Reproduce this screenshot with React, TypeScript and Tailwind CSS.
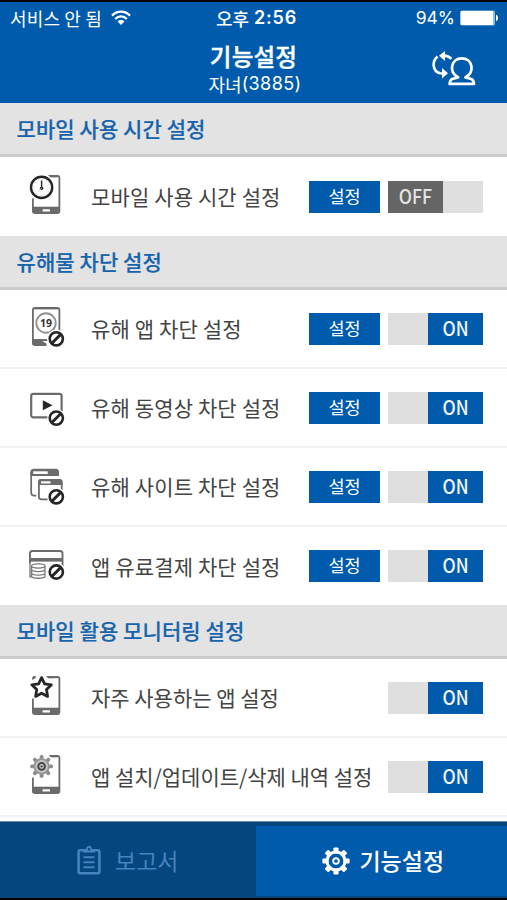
import type { ReactNode } from "react";

const GRAY = "#6b6b6b";
const DARK = "#262626";

function BlockMark() {
  return (
    <g>
      <circle cx="28.3" cy="33.8" r="9.2" fill="#fff" />
      <circle cx="28.3" cy="33.8" r="6.6" fill="#fff" stroke={DARK} strokeWidth="2.6" />
      <path d="M23.9 38.2 L32.7 29.4" stroke={DARK} strokeWidth="2.9" />
    </g>
  );
}

function Svg({ children }: { children: ReactNode }) {
  return (
    <svg width="40" height="44" viewBox="0 0 40 44" fill="none" className="mb-[3px] block">
      {children}
    </svg>
  );
}

function PhoneBody() {
  return (
    <g>
      <path d="M4 4.5 Q4 2 6.5 2 H29.5 Q32.3 2 32.3 5 V38 Q32.3 41 29.3 41 H7 Q4 41 4 38 Z" fill={GRAY} />
      <rect x="5.8" y="4.2" width="24.7" height="29.5" fill="#fff" />
      <rect x="14.5" y="36.3" width="7.5" height="2.2" rx="0.6" fill="#fff" />
    </g>
  );
}

function ClockIcon() {
  return (
    <Svg>
      <PhoneBody />
      <path d="M1 0 H20 L28 15 L18 25.5 H1 Z" fill="#fff" />
      <path d="M20 2 H29 V4.2 H22.3 Z" fill={GRAY} />
      <circle cx="13.6" cy="14.4" r="10.6" fill="#fff" stroke={DARK} strokeWidth="2.4" />
      <path d="M13.6 7.5 V15.5" stroke={DARK} strokeWidth="1.4" />
      <circle cx="13.6" cy="15.2" r="1.7" fill={DARK} />
      <path d="M13.6 15.2 L10 18.5" stroke="#c9c9c9" strokeWidth="1" />
      <circle cx="13.6" cy="14.4" r="8" stroke="#bbb" strokeWidth="0.9" strokeDasharray="1 3.2" />
    </Svg>
  );
}

function AdultIcon() {
  return (
    <Svg>
      <path d="M4 5 Q4 2 7 2 H29.3 Q32.3 2 32.3 5 V38 Q32.3 41 29 41 H7 Q4 41 4 38 Z" fill={GRAY} />
      <rect x="5.8" y="4.4" width="24.7" height="29.8" fill="#fff" />
      <circle cx="18" cy="18" r="9.7" stroke="#929292" strokeWidth="1.9" />
      <text x="18" y="21.8" textAnchor="middle" fontSize="10.5" fontWeight="700" fill="#333" className="font-['Noto_Sans',sans-serif]">19</text>
      <path d="M18.5 41.5 V38.5 L14.5 36.2 L19 34.2 V30 H33.5 V42 Z" fill="#fff" />
      <path d="M5 34.2 H19.5 V36 H5 Z" fill={GRAY} />
      <BlockMark />
    </Svg>
  );
}

function VideoIcon() {
  return (
    <Svg>
      <rect x="3.2" y="9.8" width="30.4" height="23.6" rx="2.2" stroke={GRAY} strokeWidth="2.2" />
      <path d="M14.8 16.2 L24.5 21.2 L14.8 26.2 Z" fill={DARK} />
      <g transform="translate(0 0.3)"><BlockMark /></g>
    </Svg>
  );
}

function SiteIcon() {
  return (
    <Svg>
      <path d="M3.2 9 V29.5 Q3.2 32.6 6 32.6 H8.3" stroke={GRAY} strokeWidth="1.7" />
      <path d="M2.4 9.5 Q2.4 5.8 5.5 5.8 H27.8 Q31 5.8 31 9.5 V13 H2.4 Z" fill={GRAY} />
      <rect x="5.2" y="8.3" width="14.5" height="2.7" fill="#fff" />
      <rect x="8.8" y="14.2" width="27" height="24" fill="#fff" />
      <path d="M10.9 19.5 Q10.9 17 13.5 17 H31 Q33.7 17 33.7 20 V36.3 H13.5 Q10.9 36.3 10.9 33.8 Z" stroke={GRAY} strokeWidth="1.8" fill="#fff" />
      <path d="M10.1 19.5 Q10.1 16.1 13.2 16.1 H31.2 Q34.6 16.1 34.6 19.5 V22 H10.1 Z" fill={GRAY} />
      <rect x="13" y="18.3" width="9.5" height="2.2" fill="#fff" />
      <BlockMark />
    </Svg>
  );
}

function PaymentIcon() {
  return (
    <Svg>
      <path d="M2 20 V10.5 Q2 8 4.5 8 H32 Q34.5 8 34.5 10.5 V24" stroke={GRAY} strokeWidth="1.9" />
      <rect x="2" y="15" width="33" height="3.6" fill={GRAY} />
      <path d="M2 18 V34 H17" stroke={GRAY} strokeWidth="1.2" />
      <g fill="#fff" stroke="#777" strokeWidth="1.3">
        <path d="M3.6 31 V33.2 C3.6 35.9 17 35.9 17 33.2 V31" />
        <path d="M3.6 27 V29.8 C3.6 33 17 33 17 29.8 V27" />
        <path d="M3.6 23 V26.2 C3.6 29.3 17 29.3 17 26.2 V23" />
        <ellipse cx="10.3" cy="23" rx="6.7" ry="2.1" />
      </g>
      <g transform="translate(0 -4.8)"><BlockMark /></g>
    </Svg>
  );
}

function StarIcon() {
  return (
    <Svg>
      <PhoneBody />
      <path d="M8 1 H19.5 L26 12 L20 24.5 H2 V6 Z" fill="#fff" />
      <path d="M4 6 Q4 2 8 2 L7.6 4.3 Z M18 2 H25 V4.2 H20 Z" fill={GRAY} />
      <path d="M13.6 3.6 L16.6 9.8 L23.4 10.8 L18.5 15.6 L19.6 22.4 L13.6 19.2 L7.6 22.4 L8.7 15.6 L3.8 10.8 L10.6 9.8 Z" fill="#fff" stroke={DARK} strokeWidth="2.8" strokeLinejoin="round" />
    </Svg>
  );
}

const teeth = [0, 45, 90, 135, 180, 225, 270, 315];

function UpdateIcon() {
  return (
    <Svg>
      <PhoneBody />
      <path d="M1 0 H20 L28 15 L18 24.5 H1 Z" fill="#fff" />
      <path d="M22 2 H29 V4.2 H24.3 Z" fill={GRAY} />
      {teeth.map((a) => (
        <rect key={a} x="11.7" y="2" width="3.8" height="6" rx="1.6" fill="#8d8d8d" transform={`rotate(${a} 13.6 13.4)`} />
      ))}
      <circle cx="13.6" cy="13.4" r="7.2" fill="#c6c6c6" stroke="#969696" strokeWidth="1.8" />
      <circle cx="13.6" cy="13.4" r="3.3" fill="#ddd" stroke="#444" strokeWidth="2" />
      <circle cx="13.6" cy="13.4" r="1.2" fill="#444" />
    </Svg>
  );
}

function SwitchUserIcon() {
  return (
    <svg width="46" height="38" viewBox="0 0 46 38" fill="none" className="block">
      <path d="M26.2 26.4 C16 20.5 19.3 7.4 29.8 7.4 C40.3 7.4 43.6 20.5 33.4 26.4 L39.4 28 Q41.6 29 42 32.9 H17.6 Q18 29 20.2 28 Z" stroke="#fff" strokeWidth="2.7" strokeLinejoin="round" />
      <path d="M5.6 5.4 C-0.5 10.5 0.6 20.3 8 22.2 L11.5 22.5" stroke="#fff" strokeWidth="2.6" />
      <path d="M10 17 L16 22.3 L10 27.5 Z" fill="#fff" />
      <path d="M13 0 V10 L7 4.7 Z" fill="#fff" />
      <path d="M11 4.7 Q16 4.3 19.4 7.8" stroke="#fff" strokeWidth="2.6" />
    </svg>
  );
}

function ReportIcon() {
  return (
    <svg width="24" height="30" viewBox="0 0 24 30" fill="none" stroke="#4682bd" className="block">
      <rect x="1.6" y="5.2" width="20.8" height="23" rx="1.4" strokeWidth="2.6" />
      <path d="M6 7.5 V4.5 H9 C9 -0.5 15 -0.5 15 4.5 H18 V7.5 Z" fill="#4682bd" stroke="none" />
      <circle cx="12" cy="4.3" r="1.2" fill="#05467f" stroke="none" />
      <path d="M6.5 12.2 H17.5 M6.5 17.2 H17.5 M6.5 22.2 H17.5" strokeWidth="2" />
    </svg>
  );
}

function GearIcon() {
  return (
    <svg width="28" height="28" viewBox="0 0 28 28" fill="none" className="block">
      {teeth.map((a) => (
        <rect key={a} x="11.4" y="0.4" width="5.2" height="6" rx="1" fill="#fff" transform={`rotate(${a} 14 14)`} />
      ))}
      <circle cx="14" cy="14" r="9" stroke="#fff" strokeWidth="3" />
      <circle cx="14" cy="14" r="2.8" stroke="#fff" strokeWidth="1.9" />
    </svg>
  );
}

function StatusBar() {
  return (
    <div className="grid h-8 grid-cols-3 items-center pl-[10px] pr-[8px] text-white">
      <div className="flex items-center gap-[9px]">
        <span className="whitespace-nowrap text-[18px] leading-none tracking-[0.15px]">서비스 안 됨</span>
        <svg width="20" height="16" viewBox="0 0 20 16" fill="none" stroke="#fff" strokeWidth="2.3" className="block">
          <path d="M1 5.6 C6 0.2 14 0.2 19 5.6" />
          <path d="M4.2 9 C7.5 5.6 12.5 5.6 15.8 9" />
          <path d="M10 15 L6.6 11.4 C8.5 9.6 11.5 9.6 13.4 11.4 Z" fill="#fff" stroke="none" />
        </svg>
      </div>
      <div className="flex items-center justify-center gap-[5px] whitespace-nowrap pl-[4px] leading-none">
        <span className="text-[18px] font-medium">오후</span>
        <span className="font-['Inter',sans-serif] text-[18px] font-semibold tracking-[0.8px]">2:56</span>
      </div>
      <div className="flex items-center justify-end gap-[5px]">
        <span className="font-['Inter',sans-serif] text-[17.5px] leading-none">94%</span>
        <svg width="39" height="16" viewBox="0 0 39 16" className="block">
          <rect x="0.5" y="0.5" width="34.5" height="15" rx="1.5" fill="#8fb9df" />
          <rect x="0.5" y="1" width="32.5" height="14" rx="1" fill="#fff" />
          <path d="M36.5 5 Q38.6 8 36.5 11 Z" fill="#fff" stroke="#fff" />
        </svg>
      </div>
    </div>
  );
}

function Header() {
  return (
    <header className="h-[101px] shrink-0 bg-[#005bac]">
      <StatusBar />
      <div className="grid grid-cols-[1fr_auto_1fr]">
        <div />
        <div className="flex flex-col items-center whitespace-nowrap text-white">
          <h1 className="mt-[10px] text-[23.5px] font-medium leading-[25px] tracking-[0.2px] [-webkit-text-stroke:0.4px_white]">기능설정</h1>
          <p className="mt-[6px] flex items-center pl-[3px] text-[18px] leading-[18px]">
            <span>자녀</span>
            <span className="font-['Inter',sans-serif] tracking-[0.4px]">(3885)</span>
          </p>
        </div>
        <div className="flex justify-end pr-[29px] pt-[17px]">
          <SwitchUserIcon />
        </div>
      </div>
    </header>
  );
}

function Section({ title }: { title: string }) {
  return (
    <h2 className="flex h-[54px] shrink-0 items-center border-b-[3px] border-[#cbcbcb] bg-[#e3e3e3] pb-px pl-[16.5px] text-[21px] font-medium leading-none tracking-[0.08px] text-[#1763ac] [-webkit-text-stroke:0.2px_#1763ac]">
      {title}
    </h2>
  );
}

type RowProps = { icon: ReactNode; label: string; setting?: boolean; off?: boolean; size?: string };

function Row({ icon, label, setting, off, size = "h-[79px] border-b-2" }: RowProps) {
  return (
    <div className={`flex shrink-0 items-center border-[#f1f1f1] pl-[28px] pr-6 ${size}`}>
      {icon}
      <span className={`ml-[23px] flex-1 whitespace-nowrap text-[21px] leading-none text-[#444] ${setting ? "tracking-[0.13px]" : "tracking-[-0.02px]"}`}>{label}</span>
      {setting && (
        <button className="mr-2 flex h-8 w-[71px] items-center justify-center bg-[#005bac] pb-[2px] text-[17.5px] leading-none text-white">
          설정
        </button>
      )}
      <div className={`flex h-8 w-[95px] bg-[#dfdfdf] ${off ? "justify-start" : "justify-end"}`}>
        <div className={`flex w-[55px] items-center justify-center pb-[2px] text-[19.5px] font-medium leading-none ${off ? "bg-[#656565] text-[#e4e4e4]" : "bg-[#005bac] text-[#f0f6fc]"}`}>
          <span className="scale-x-90">{off ? "OFF" : "ON"}</span>
        </div>
      </div>
    </div>
  );
}

export default function App() {
  return (
    <div className="flex h-[900px] w-[507px] flex-col overflow-hidden border-y-2 border-black bg-white font-['Noto_Sans_CJK_KR',sans-serif]">
      <Header />
      <main className="flex min-h-0 flex-1 flex-col overflow-hidden">
        <Section title="모바일 사용 시간 설정" />
        <Row icon={<ClockIcon />} label="모바일 사용 시간 설정" setting off size="h-[79px]" />
        <Section title="유해물 차단 설정" />
        <Row icon={<AdultIcon />} label="유해 앱 차단 설정" setting />
        <Row icon={<VideoIcon />} label="유해 동영상 차단 설정" setting />
        <Row icon={<SiteIcon />} label="유해 사이트 차단 설정" setting />
        <Row icon={<PaymentIcon />} label="앱 유료결제 차단 설정" setting size="h-[78px]" />
        <Section title="모바일 활용 모니터링 설정" />
        <Row icon={<StarIcon />} label="자주 사용하는 앱 설정" />
        <Row icon={<UpdateIcon />} label="앱 설치/업데이트/삭제 내역 설정" />
      </main>
      <nav className="grid h-[77px] shrink-0 grid-cols-2 border-t border-[#6f8ba3] bg-[#05467f] leading-none">
        <div className="flex items-center justify-center gap-[14px] pl-[2px] text-[23px] text-[#4682bd]">
          <ReportIcon />
          <span>보고서</span>
        </div>
        <div className="mb-[2px] ml-[2px] mt-1 flex items-center justify-center gap-[9px] bg-[#005bac] pl-[4px] text-[23px] font-medium text-white">
          <GearIcon />
          <span className="pb-[2px]">기능설정</span>
        </div>
      </nav>
    </div>
  );
}
